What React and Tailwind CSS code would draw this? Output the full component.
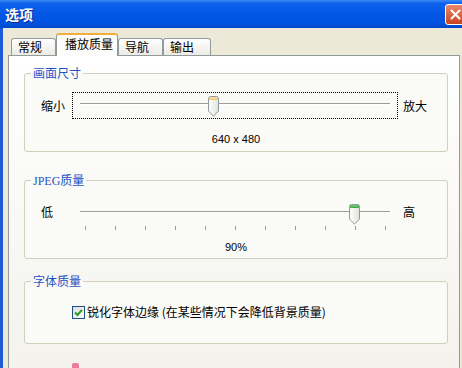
import React from "react";

const Thumb = ({ tone, className }) => {
  const cap = tone === "green" ? "#3DAA45" : "#F3C873";
  const capLight = tone === "green" ? "#8AD88F" : "#FBE6B4";
  const id = `thumb-${tone}`;
  return (
    <svg width="11" height="21" viewBox="0 0 11 21" className={`absolute top-[3px] ${className}`}>
      <defs>
        <linearGradient id={id} x1="0" y1="0" x2="1" y2="0">
          <stop offset="0" stopColor="#FFFFFF" />
          <stop offset="1" stopColor="#E3E1D8" />
        </linearGradient>
      </defs>
      <path
        d="M0.5 2.5 Q0.5 0.5 2.5 0.5 H8.5 Q10.5 0.5 10.5 2.5 V15 L5.5 20.2 L0.5 15 Z"
        fill={`url(#${id})`}
        stroke="#8E9A9E"
      />
      <rect x="1" y="1" width="9" height="3" rx="1" fill={cap} />
      <rect x="2" y="1.5" width="7" height="1" fill={capLight} />
    </svg>
  );
};

const Slider = ({ focused, thumb, tone }) => (
  <div
    className={`relative h-[27px] w-[326px] border border-dotted ${
      focused ? "border-black" : "border-transparent"
    }`}
  >
    <div className="mx-[7px] mt-[10px] h-[2px] border-t border-b border-t-[#9D9C95] border-b-white" />
    <Thumb tone={tone} className={thumb} />
  </div>
);

const GroupBox = ({ title, className, children }) => (
  <fieldset className={`rounded-[3px] border border-[#D0D0BF] bg-[#FAFAF6] ${className}`}>
    <legend className="ml-[6px] px-[2px] text-[12px] leading-[16px] text-[#1E54C6]">{title}</legend>
    {children}
  </fieldset>
);

const Tab = ({ label, width, active }) =>
  active ? (
    <div
      className={`relative z-10 -mb-px flex h-[23px] ${width} items-center rounded-t-[3px] border border-b-0 border-[#919B9C] border-t-2 border-t-[#F0AE3C] bg-[#FDFDFC] pb-[3px] pl-[8px]`}
    >
      {label}
    </div>
  ) : (
    <div
      className={`flex h-[17px] ${width} items-center rounded-t-[3px] border border-b-0 border-[#919B9C] bg-linear-to-b from-white to-[#ECEBE5] pl-[6px]`}
    >
      {label}
    </div>
  );

export default function App() {
  return (
    <div className="flex h-[368px] w-[462px] flex-col overflow-hidden bg-[#ECE9D8] font-['Noto_Sans_CJK_SC','Noto_Sans',sans-serif] text-[12px] leading-[16px] text-black">
      {/* Title bar */}
      <header className="flex h-[28px] shrink-0 items-center justify-between bg-[linear-gradient(to_bottom,#3A8CF6_0%,#0F62EC_12%,#0457E6_50%,#0053DF_85%,#0046C6_100%)] pl-[5px]">
        <span className="text-[14px] font-bold text-white [text-shadow:1px_1px_0_#0A2E8A]">选项</span>
        <button className="-mr-[4px] flex h-[21px] w-[21px] items-center justify-center rounded-[3px] border border-white bg-linear-to-b from-[#E8896A] to-[#C8431E]">
          <svg width="11" height="11" viewBox="0 0 11 11">
            <path d="M1.5 1.5 L9.5 9.5 M9.5 1.5 L1.5 9.5" stroke="white" strokeWidth="2" strokeLinecap="round" />
          </svg>
        </button>
      </header>

      {/* Body */}
      <section className="flex flex-1 flex-col border-l-[3px] border-[#1D5BD8] pl-[5px] pt-[5px]">
        <nav className="flex h-[22px] items-end pl-[3px]">
          <Tab label="常规" width="w-[45px]" />
          <Tab label="播放质量" width="w-[62px]" active />
          <Tab label="导航" width="w-[45px]" />
          <Tab label="输出" width="w-[48px]" />
        </nav>

        <div className="flex w-[452px] flex-1 flex-col border border-[#919B9C] bg-linear-to-b from-white to-[#F3F2EC] pl-[15px] pr-[11px] pt-[9px]">
          {/* 画面尺寸 */}
          <GroupBox title="画面尺寸" className="pb-[4px]">
            <div className="mt-[11px] flex items-center pl-[16px]">
              <span className="w-[31px]">缩小</span>
              <Slider focused tone="amber" thumb="left-[135px]" />
              <span className="ml-[5px]">放大</span>
            </div>
            <p className="mt-[12px] text-center font-['Liberation_Sans',sans-serif] text-[11px]">640 x 480</p>
          </GroupBox>

          {/* JPEG质量 */}
          <GroupBox
            title={
              <span>
                <span className="font-['Liberation_Serif',serif]">JPEG</span>质量
              </span>
            }
            className="mt-[20px] pb-[3px]"
          >
            <div className="mt-[11px] flex items-center pl-[16px]">
              <span className="mb-[3px] w-[31px]">低</span>
              <Slider tone="green" thumb="left-[276px]" />
              <span className="mb-[3px] ml-[5px]">高</span>
            </div>
            <div className="-mt-px ml-[60px] flex w-[301px] justify-between">
              {Array.from({ length: 11 }).map((_, i) => (
                <span key={i} className="h-[4px] w-px bg-[#9C9C94]" />
              ))}
            </div>
            <p className="mt-[9px] text-center font-['Liberation_Sans',sans-serif] text-[11px]">90%</p>
          </GroupBox>

          {/* 字体质量 */}
          <GroupBox title="字体质量" className="mt-[14px] pb-[23px]">
            <label className="mt-[15px] flex items-center gap-[2px] pl-[47px]">
              <span className="flex h-[13px] w-[13px] items-center justify-center border border-[#1C5180] bg-linear-to-br from-[#DCDCD7] to-white">
                <svg width="9" height="9" viewBox="0 0 9 9">
                  <path d="M1 4.5 L3.5 7 L8 1.8" fill="none" stroke="#21A121" strokeWidth="2" />
                </svg>
              </span>
              <span>锐化字体边缘 (在某些情况下会降低背景质量)</span>
            </label>
          </GroupBox>

          <div className="mt-[19px] pl-[48px]">
            <span className="block h-[8px] w-[7px] rounded-[2px] bg-[#E97C97]" />
          </div>
        </div>
      </section>
    </div>
  );
}
